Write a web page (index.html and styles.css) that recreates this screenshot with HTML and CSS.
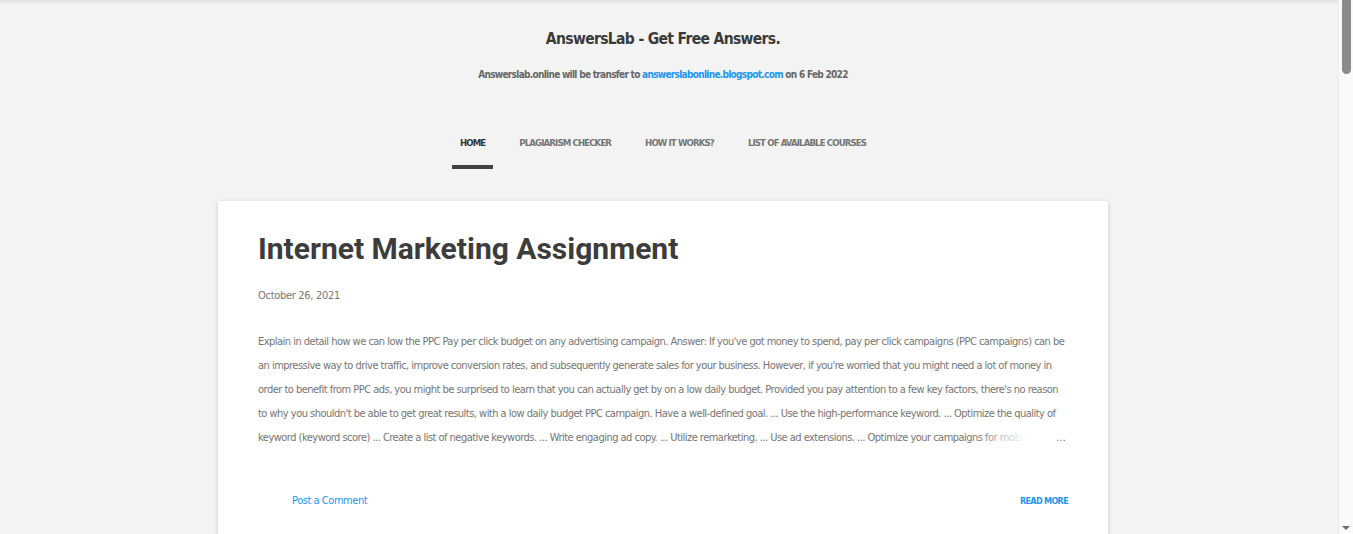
FILE: index.html
```html
<!DOCTYPE html>
<html lang="en">
<head>
    <meta charset="UTF-8">
    <meta name="viewport" content="width=device-width, initial-scale=1.0">
    <title>AnswersLab - Get Free Answers.</title>
    <link rel="stylesheet" href="styles.css">
</head>
<body>
    <div class="topbar"></div>

    <div class="page">
        <header class="site-header">
            <h1 class="site-title">AnswersLab - Get Free Answers.</h1>
            <p class="site-desc">Answerslab.online will be transfer to <a href="#">answerslabonline.blogspot.com</a> on 6 Feb 2022</p>
        </header>

        <nav class="tabs">
            <a href="#" class="tab active">Home</a>
            <a href="#" class="tab">Plagiarism Checker</a>
            <a href="#" class="tab">How it works?</a>
            <a href="#" class="tab">List of Available Courses</a>
        </nav>

        <main class="posts">
            <article class="post">
                <h2 class="post-title">Internet Marketing Assignment</h2>
                <div class="post-date">October 26, 2021</div>
                <div class="snippet">
                    Explain in detail how we can low the PPC Pay per click budget on any advertising campaign. Answer: If you've got money to spend, pay per click campaigns (PPC campaigns) can be an impressive way to drive traffic, improve conversion rates, and subsequently generate sales for your business. However, if you're worried that you might need a lot of money in order to benefit from PPC ads, you might be surprised to learn that you can actually get by on a low daily budget. Provided you pay attention to a few key factors, there's no reason to why you shouldn't be able to get great results, with a low daily budget PPC campaign. Have a well-defined goal. ... Use the high-performance keyword. ... Optimize the quality of keyword (keyword score) ... Create a list of negative keywords. ... Write engaging ad copy. ... Utilize remarketing. ... Use ad extensions. ... Optimize your campaigns for mobile. ... Track your results and adjust your budget.
                    <span class="fade">&hellip;</span>
                </div>
                <div class="post-footer">
                    <a href="#" class="comment-link">Post a Comment</a>
                    <a href="#" class="read-more">Read more</a>
                </div>
            </article>

            <article class="post">
                <h2 class="post-title">Digital Marketing Quiz Answers</h2>
                <div class="post-date">October 20, 2021</div>
                <div class="snippet">
                    What is the main purpose of a landing page? Answer: A landing page is a standalone web page, created specifically for a marketing or advertising campaign. It's where a visitor lands after they click on a link in an email, or ads from Google, Bing, YouTube, Facebook, Instagram, Twitter, or similar places on the web. Unlike web pages, which typically have many goals and encourage exploration, landing pages are designed with a single focus or goal, known as a call to action.
                    <span class="fade">&hellip;</span>
                </div>
                <div class="post-footer">
                    <a href="#" class="comment-link">Post a Comment</a>
                    <a href="#" class="read-more">Read more</a>
                </div>
            </article>
        </main>
    </div>

    <!-- page scrollbar, as the browser drew it -->
    <div class="scrollbar">
        <div class="scroll-thumb"></div>
        <div class="scroll-arrow"></div>
    </div>
</body>
</html>
```

FILE: styles.css
```css
body {
    margin: 0;
    background-color: #f3f3f3;
    font-family: 'DejaVu Sans Condensed', 'DejaVu Sans', sans-serif;
    color: #757575;
}
a {
    text-decoration: none;
    color: #2196f3;
}
.topbar {
    height: 1px;
    margin-right: 15px;
    background-color: #e4e4e4;
    box-shadow: 0 0 3px rgba(0, 0, 0, 0.35);
}
.page {
    padding-right: 27px;
}
.site-header {
    text-align: center;
    padding-top: 23px;
}
.site-title {
    margin: 0;
    font-size: 15.5px;
    line-height: 30px;
    letter-spacing: -0.65px;
    font-weight: bold;
    color: #3a3a3a;
}
.site-desc {
    margin: 11px 0 0;
    font-size: 10px;
    line-height: 20px;
    letter-spacing: -0.7px;
    font-weight: bold;
    color: #666;
}
.tabs {
    display: flex;
    justify-content: center;
    gap: 18px;
    margin-top: 48px;
}
.tab {
    display: block;
    padding: 0 8px 12px;
    line-height: 20px;
    font-size: 9.5px;
    font-weight: bold;
    letter-spacing: -0.85px;
    text-transform: uppercase;
    color: #757575;
    border-bottom: 4px solid transparent;
}
.tab.active {
    color: #333;
    border-bottom-color: #424242;
}
.posts {
    max-width: 890px;
    margin: 32px auto 0;
}
.post {
    background-color: #fff;
    box-shadow: 0 1px 4px rgba(0, 0, 0, 0.18);
    padding: 30px 40px 32px;
    margin-bottom: 32px;
}
.post-title {
    margin: 0;
    font-family: Roboto, 'Liberation Sans', sans-serif;
    font-size: 30px;
    line-height: 36px;
    font-weight: bold;
    color: #3c3c3c;
}
.post-date {
    margin-top: 19px;
    font-size: 11px;
    line-height: 20px;
    letter-spacing: -0.3px;
}
.snippet {
    position: relative;
    margin-top: 24px;
    height: 120px;
    overflow: hidden;
    font-size: 11px;
    line-height: 24px;
    letter-spacing: -0.52px;
}
.fade {
    position: absolute;
    right: 0;
    top: 96px;
    width: 90px;
    height: 24px;
    padding-right: 2px;
    text-align: right;
    letter-spacing: 0;
    background: linear-gradient(to right, rgba(255, 255, 255, 0), #fff 55%);
    color: #757575;
}
.post-footer {
    display: flex;
    justify-content: space-between;
    margin-top: 41px;
    line-height: 20px;
    font-size: 11px;
}
.comment-link {
    margin-left: 34px;
    letter-spacing: -0.45px;
}
.read-more {
    font-size: 9px;
    font-weight: bold;
    letter-spacing: -0.7px;
    text-transform: uppercase;
}
.scrollbar {
    position: fixed;
    top: 0;
    right: 0;
    width: 15px;
    height: 100%;
    background-color: #fafafa;
    border-left: 1px solid #ececec;
    box-sizing: border-box;
}
.scroll-thumb {
    margin: 0 2px 0 3px;
    height: 74px;
    background-color: #8a8a8a;
    border-radius: 0 0 5px 5px;
}
.scroll-arrow {
    position: absolute;
    bottom: 4px;
    left: 3px;
    width: 0;
    height: 0;
    border-left: 4px solid transparent;
    border-right: 4px solid transparent;
    border-top: 4px solid #6e6e6e;
}
```
